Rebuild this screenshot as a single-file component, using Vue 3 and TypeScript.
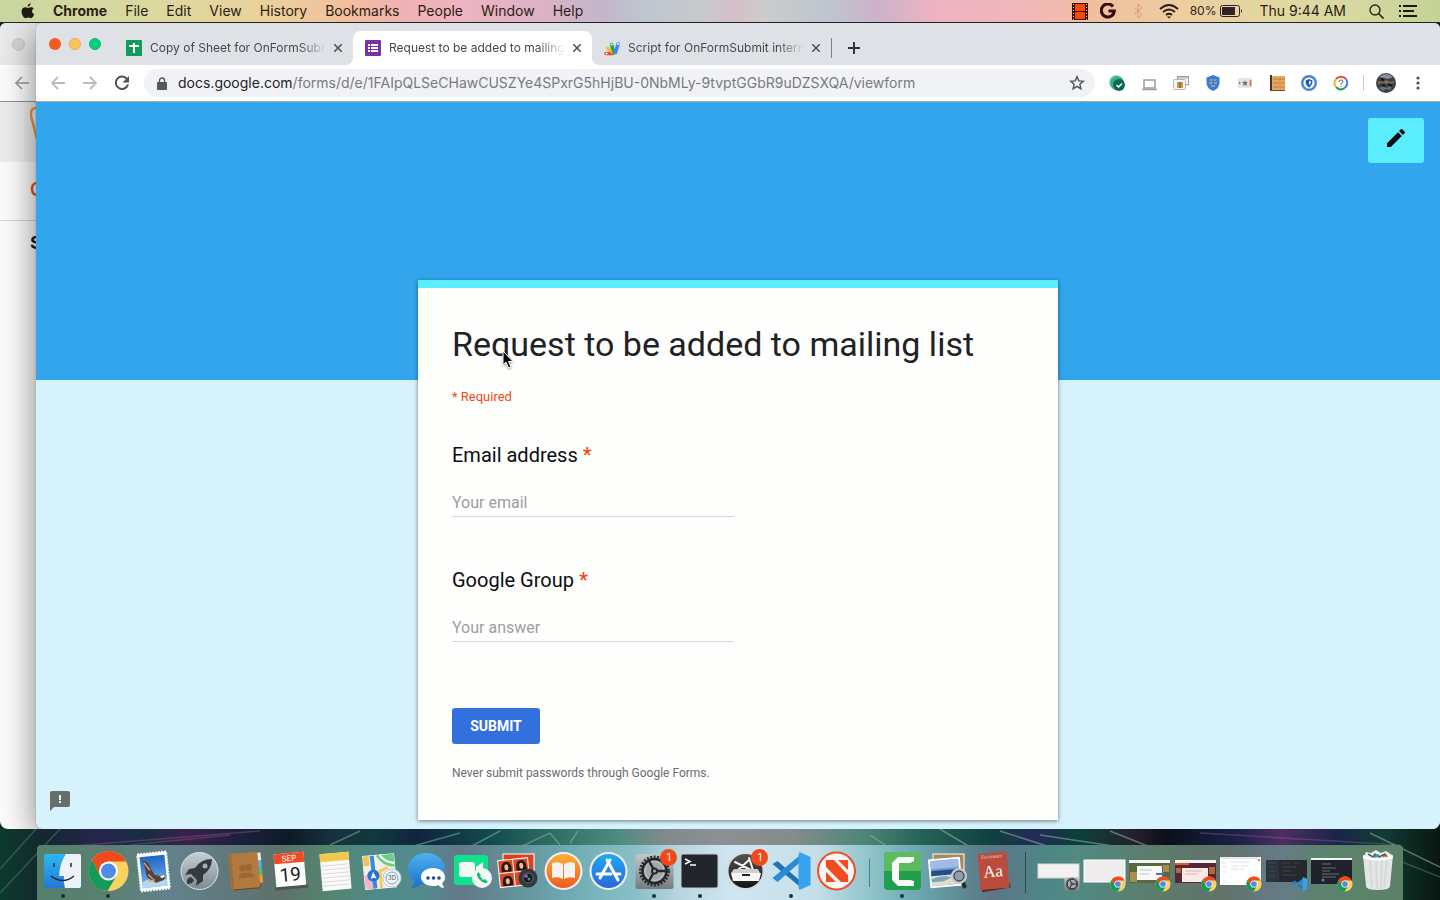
<script setup lang="ts">
import { ref } from 'vue'

interface DockItem {
  name: string
  art: string
  running?: boolean
  badge?: number
}

const email = ref('')
const group = ref('')

const menus: string[] = ['File', 'Edit', 'View', 'History', 'Bookmarks', 'People', 'Window', 'Help']

const chromeBall = (x: number, y: number, s: number): string =>
  `<g transform="translate(${x} ${y}) scale(${s})"><circle r="20" fill="#f9d262"/><path d="M-16.500-11.300A20 20 0 0 1 17.600-9.500H0L-8.200 4.800z" fill="#ee4a1c"/><path d="M-16.500-11.300A20 20 0 0 0-1 20L8.200 4.800H-8.200z" fill="#169a5c"/><circle r="9.500" fill="#fff"/><circle r="7.500" fill="#4f8ce8"/></g>`

const codeMark = (x: number, y: number, s: number): string =>
  `<g transform="translate(${x} ${y}) scale(${s})"><path d="M-19-7l5-3L10 11v6z" fill="#1f72b8"/><path d="M-19 7l5 4L10-10v-7z" fill="#2a8bd8"/><path d="M8-19l11 5v28L8 19l-1-3V-16z" fill="#35a3ee"/></g>`

const gear = (x: number, y: number, s: number): string =>
  `<g transform="translate(${x} ${y}) scale(${s})"><rect x="-19" y="-17" width="38" height="35" rx="2" fill="url(#g-steel)"/><circle r="14" fill="none" stroke="#2b2e30" stroke-width="3" stroke-dasharray="2 1.400"/><circle r="12" fill="#a4a8aa" stroke="#25282a" stroke-width="2.500"/><circle r="9.500" fill="none" stroke="#c6c9ca" stroke-width="1"/><path d="M0 0L11 0M0 0L-5.500-10M0 0L-5.500 10" stroke="#25282a" stroke-width="2.500"/><circle r="2.500" fill="#aaa" stroke="#25282a" stroke-width="2"/></g>`

const apps: DockItem[] = [
  {
    name: 'Finder',
    running: true,
    art: `<rect x="4" y="9" width="37" height="34" rx="2" fill="url(#g-finder)"/><path d="M26 9h13q2 0 2 2v30q0 2-2 2H25q-2-6-1-12h-5q1-14 7-22z" fill="#eef2f8"/><path d="M14 18v4M31 18v4" stroke="#17283c" stroke-width="1.500"/><path d="M11 31q12 9 23 0" fill="none" stroke="#17283c" stroke-width="1.500"/>`,
  },
  { name: 'Google Chrome', running: true, art: chromeBall(22.5, 26, 1) },
  {
    name: 'Mail',
    art: `<g transform="rotate(-6 22 26)"><rect x="8" y="8" width="29" height="37" fill="#fff" stroke="#fff" stroke-width="2" stroke-dasharray="2 1"/><rect x="10" y="11" width="25" height="31" fill="url(#g-sky)"/><path d="M10 36q12-5 25 0v6H10z" fill="#b2d7ef"/><path d="M13 15q6 1 7 8l3 7 6 2 5-1-2 5-8 2-6-4q-4-3-3-8z" fill="#5a4030"/><path d="M14 17l5 8M17 29l4 5" stroke="#c6a680" stroke-width="1.500"/><path d="M29 33l4-1" stroke="#fff" stroke-width="2"/><path d="M16 36l7-1" stroke="#d8a860" stroke-width="1.500"/></g>`,
  },
  {
    name: 'Launchpad',
    art: `<circle cx="22.500" cy="26" r="18.500" fill="url(#g-silver)" stroke="#dfe5e7" stroke-width="1"/><path d="M35 14q-11 0-17 9l-6 1-4 6 6-1 6 6-1 6 7-5v-6q9-6 9-16z" fill="#343a40"/><circle cx="28" cy="21" r="2.500" fill="#a5b0b5"/><path d="M14 32q-5 1-4 7 6 0 7-4z" fill="#343a40"/>`,
  },
  {
    name: 'Contacts',
    art: `<g transform="rotate(-5 22 26)"><path d="M36 9h4v8h-4z" fill="#e8edf2"/><path d="M36 17h4v7h-4z" fill="#4fb6e8"/><path d="M36 24h4v7h-4z" fill="#37c888"/><path d="M36 31h4v8h-4z" fill="#ec9c3b"/><rect x="8" y="8" width="29" height="36" rx="2" fill="#b27a41"/><path d="M8 8h3v36H8z" fill="#a36d38"/><path d="M10 44h26l2-3" fill="none" stroke="#6c4520" stroke-width="1"/><g fill="#9c6735"><circle cx="21" cy="23" r="3.500"/><circle cx="27" cy="23" r="3.500"/><path d="M16 33q1-6 8-5 8-1 8 5z"/></g></g>`,
  },
  {
    name: 'Calendar',
    art: `<g transform="rotate(-5 22 26)"><path d="M8 40h30l1 4H5z" fill="#4d5455"/><rect x="7" y="8" width="30" height="33" fill="#fbfbfb"/><rect x="7" y="8" width="30" height="10" fill="#ee4a25"/><text x="22" y="16" font-family="Inter,sans-serif" font-size="8" text-anchor="middle" fill="#fff">SEP</text><text x="22" y="36" font-family="Roboto,sans-serif" font-size="19" text-anchor="middle" fill="#222">19</text></g>`,
  },
  {
    name: 'Notes',
    art: `<g transform="rotate(-5 22 26)"><rect x="8" y="8" width="29" height="37" fill="#fafafa"/><rect x="8" y="8" width="29" height="8" fill="#f3c84d"/><path d="M8 20h29M8 24h29M8 28h29M8 32h29M8 36h29M8 40h29" stroke="#dcdad6" stroke-width="1"/></g>`,
  },
  {
    name: 'Maps',
    art: `<g transform="rotate(-5 22 26)"><rect x="5" y="10" width="31" height="33" fill="#f1efe6" stroke="#fff"/><path d="M5 10h6v10H5z" fill="#f2c35a"/><path d="M18 10h18v13q-12-1-18-13z" fill="#68cf86"/><path d="M22 10q5 8 14 9" fill="none" stroke="#fff" stroke-width="2"/><path d="M5 29h10v14H5z" fill="#f1b6c3"/><path d="M14 10l1 33" stroke="#3988e4" stroke-width="4"/><path d="M21 43V26l8-3" fill="none" stroke="#f4cd5c" stroke-width="3"/><circle cx="14" cy="30" r="6" fill="#2374dc"/><path d="M14 26l3 7-3-1-3 1z" fill="#fff"/></g><circle cx="33" cy="33" r="9" fill="#f3f6f7" stroke="#c3c9cc" stroke-width="1"/><circle cx="33" cy="33" r="6" fill="none" stroke="#6aa2d0" stroke-width="1"/><text x="33" y="35" font-family="Inter,sans-serif" font-size="6" text-anchor="middle" fill="#555">3D</text>`,
  },
  {
    name: 'Messages',
    art: `<path d="M22 8c-10 0-18 7-18 16 0 5 3 9 6 12 0 3-1 5-3 7 5 0 8-2 10-4 16 3 24-5 24-15 0-9-8-16-19-16z" fill="url(#g-sky2)"/><path d="M29 23c-7 0-12 4-12 9s5 9 12 9c2 0 4 0 5-1 2 2 4 3 6 3l-2-5c2-1 3-3 3-6 0-5-5-9-12-9z" fill="#fff"/><g fill="#244c86"><circle cx="24" cy="33" r="1.800"/><circle cx="29.500" cy="33" r="1.800"/><circle cx="35" cy="33" r="1.800"/></g>`,
  },
  {
    name: 'FaceTime',
    art: `<rect x="4" y="10" width="34" height="30" rx="3" fill="#0ee38c"/><rect x="9" y="17" width="16" height="15" rx="3" fill="#f5f7f7"/><path d="M26 22l7-5v13l-7-4z" fill="#f5f7f7"/><circle cx="32" cy="33" r="10" fill="#f3f6f6"/><path d="M28 27q-3 3 2 8 5 5 8 2l-3-3-2 1-3-4 1-1z" fill="#17bf72"/>`,
  },
  {
    name: 'Photo Booth',
    art: `<rect x="8" y="9" width="31" height="24" fill="#d9431f" stroke="#fff"/><g transform="rotate(-6 20 28)"><rect x="4" y="14" width="30" height="27" fill="#dc4a22" stroke="#fff" stroke-width="1"/><path d="M19 14v27M4 27h30" stroke="#fff" stroke-width="1"/><g fill="#271612"><path d="M7 26V21q1-5 5-5t5 5v5zM22 26V21q1-5 5-5t5 5v5zM7 40v-5q1-5 5-5t5 5v5z"/></g><g fill="#efbd98"><ellipse cx="12" cy="21.500" rx="2" ry="3"/><ellipse cx="27" cy="21.500" rx="2" ry="3"/><ellipse cx="12" cy="35.500" rx="2" ry="3"/></g></g><circle cx="33" cy="33" r="9.500" fill="#35373c"/><circle cx="33" cy="33" r="5" fill="#101722" stroke="#686c76"/><circle cx="31" cy="31" r="2" fill="#8a5a9a"/><circle cx="34" cy="34" r="1.500" fill="#2aa06c"/>`,
  },
  {
    name: 'Books',
    art: `<circle cx="22.500" cy="26" r="19" fill="#f2f2f2"/><circle cx="22.500" cy="26" r="17" fill="url(#g-books)"/><path d="M22 19q-5-3-11-1v15q6-2 11 1zM23 19q5-3 11-1v15q-6-2-11 1z" fill="#f7f4ef"/>`,
  },
  {
    name: 'App Store',
    art: `<circle cx="22.500" cy="26" r="19" fill="#eef2f4"/><circle cx="22.500" cy="26" r="17" fill="url(#g-store)"/><path d="M24 15L14 33M21 15l11 20M11 29h14M29 29h5" stroke="#fff" stroke-width="3" stroke-linecap="round"/>`,
  },
  { name: 'System Preferences', running: true, badge: 1, art: gear(22.5, 26, 1) },
  {
    name: 'Terminal',
    running: true,
    art: `<rect x="4" y="9" width="37" height="34" rx="2" fill="#22252b" stroke="#c6ccd0" stroke-width="1"/><path d="M8 14l5 2.500-5 2.500M13 20h6" stroke="#fff" stroke-width="1.500" fill="none"/>`,
  },
  {
    name: 'Installer',
    badge: 1,
    art: `<circle cx="22.500" cy="26" r="18" fill="url(#g-dark)" stroke="#d8dcde" stroke-width="2"/><path d="M12 17l16 8M26 15l-11 10M26 13l4 12" stroke="#f3f3f3" stroke-width="2" stroke-linecap="round"/><path d="M11 24h24l2 4H8z" fill="#cfcfcf"/><path d="M8 28h30l-2 8H10z" fill="#f6f6f6"/><path d="M19 30h8" stroke="#222" stroke-width="2"/>`,
  },
  { name: 'Visual Studio Code', running: true, art: codeMark(22.5, 26, 1) },
  {
    name: 'News',
    art: `<circle cx="22.500" cy="26" r="19.500" fill="#ef4c22"/><circle cx="22.500" cy="26" r="17.500" fill="#fbf6f4"/><path d="M12 15h8l14 15v7h-7L12 22zM24 15h10v10zM12 27l10 10H12z" fill="#ef4c22"/>`,
  },
]

const recents: DockItem[] = [
  {
    name: 'Camtasia',
    running: true,
    art: `<rect x="4" y="7" width="37" height="38" rx="4" fill="#20a04f"/><path d="M4 11q0-4 4-4h29q4 0 4 4v15H4z" fill="#5cba5f"/><path d="M34 12H18l-6 6v17l6 6h16v-5l-4-1H19V18h11l4-2z" fill="#f8faf8"/>`,
  },
  {
    name: 'Preview',
    art: `<rect x="8" y="9" width="31" height="20" fill="#ad8755" stroke="#fff"/><g transform="rotate(-5 20 26)"><rect x="5" y="14" width="30" height="27" fill="#6e9bd6" stroke="#fff" stroke-width="2"/><path d="M6 15h28v8H6z" fill="#a3bbe4"/><path d="M6 29q14-4 28 1v10H6z" fill="#e4dccb"/><path d="M6 25h28v5H6z" fill="#224d87"/><path d="M6 33q12-4 20 0l-8 3H6z" fill="#7aa5bd"/></g><path d="M37 35l3 8" stroke="#242a2e" stroke-width="4"/><circle cx="34" cy="31" r="7" fill="#8f9eae" stroke="#c9c9c9" stroke-width="2"/><circle cx="34" cy="31" r="5" fill="none" stroke="#333" stroke-width="1"/>`,
  },
  {
    name: 'Dictionary',
    art: `<g transform="rotate(-5 22 26)"><path d="M8 42l28 0 2-3 0 5-28 2z" fill="#5b231c"/><rect x="8" y="8" width="29" height="36" rx="1" fill="#ba4c3d"/><text x="22" y="13" font-family="Liberation Serif,serif" font-size="5" text-anchor="middle" fill="#f3d9d0">Dictionary</text><text x="22" y="32" font-family="Liberation Serif,serif" font-size="17" text-anchor="middle" fill="#fff">Aa</text></g>`,
  },
]

const minimised: DockItem[] = [
  { name: 'Preferences window', art: `<rect x="2" y="19" width="41" height="14" fill="#f3f2f1" stroke="#d5d5d5" stroke-width="1"/>${gear(36, 39, 0.4)}` },
  { name: 'Blank window', art: `<rect x="2" y="15" width="41" height="22" fill="#eeecec" stroke="#fff" stroke-width="1"/>${chromeBall(36, 39, 0.38)}` },
  {
    name: 'Dialog window',
    art: `<rect x="2" y="15" width="41" height="23" fill="#5a683f"/><path d="M2 15h41v3H2z" fill="#f3f3f3"/><path d="M3 27h7v10H3zM36 20h6v7h-6z" fill="#a78d50"/><rect x="10" y="21" width="25" height="14" fill="#f8f8f7"/><path d="M13 25h12M13 29h9" stroke="#a9c7ca"/><path d="M29 29h8" stroke="#3a75e3" stroke-width="2"/>${chromeBall(36, 39, 0.38)}`,
  },
  {
    name: 'Document window',
    art: `<rect x="2" y="15" width="41" height="23" fill="#562638"/><path d="M2 15h41v3H2z" fill="#f3f3f3"/><path d="M2 19h14" stroke="#e35b2a" stroke-width="2"/><path d="M3 23h5v5H3zM36 22h6v7h-6z" fill="#b06a3a"/><rect x="9" y="23" width="26" height="14" fill="#f7e9e5"/><path d="M12 26h17M12 29h13" stroke="#e0b3b0"/>${chromeBall(36, 39, 0.38)}`,
  },
  {
    name: 'List window',
    art: `<rect x="2" y="12" width="41" height="28" fill="#fff"/><path d="M2 13h38" stroke="#c6d5df"/><path d="M12 17h20M13 21h8M23 21h8M13 24h13M4 18h4M4 22h5M4 27h4M5 36h3" stroke="#e6dfe4" stroke-width="1"/><circle cx="41" cy="15" r="1" fill="#e94a30"/>${chromeBall(36, 39, 0.38)}`,
  },
  {
    name: 'Editor window',
    art: `<rect x="2" y="15" width="41" height="22" fill="#25282c"/><path d="M2 15h13v22H2z" fill="#2b3540"/><path d="M5 18h7M17 18h10M30 18h5M5 22h5M18 22h14M5 26h8M18 26h9M18 30h15M5 31h6" stroke="#3e4751" stroke-width="1"/>${codeMark(36, 39, 0.37)}`,
  },
  {
    name: 'Console window',
    art: `<rect x="2" y="13" width="41" height="26" fill="#20242a"/><path d="M2 14h41" stroke="#f4f4f4" stroke-width="2"/><path d="M13 19h9M13 23h14M13 26h8M13 29h17M13 32h14" stroke="#646c74" stroke-width="1"/><circle cx="14" cy="35" r="1.500" fill="#4b83e8"/>${chromeBall(36, 39, 0.38)}`,
  },
  {
    name: 'Trash',
    art: `<path d="M8 10h30l-3 31q0 4-12 4T11 41z" fill="#e3e6e5"/><path d="M15 14l2 28M21 14l1 30M27 14l-1 30M32 14l-3 28" stroke="#d5d9d8" stroke-width="2"/><path d="M9 12l2-5 5 1 5-3 5 3 5-2 6 4v4q-14 3-28-2z" fill="#eee"/><path d="M13 9l5 3 2-3 4 3 6-3 2 3" fill="none" stroke="#5c5c59" stroke-width="1.500"/><path d="M19 12l5-2" stroke="#1aa0b9" stroke-width="2"/><path d="M28 12l3-2" stroke="#d84a2a" stroke-width="1.500"/><path d="M8 12q15 5 30 0" fill="none" stroke="#fff" stroke-width="2"/>`,
  },
]

const dockGroups: DockItem[][] = [apps, recents, minimised]

const sheetsIcon = `<rect width="16" height="16" rx="1" fill="#0f9d58"/><path d="M7 3h2v10H7zM3 5h10v2H3z" fill="#fff"/>`
const formsIcon = `<rect width="16" height="16" rx="1" fill="#7633a8"/><path d="M3 4h2v2H3zM6 4h7v2H6zM3 7h2v2H3zM6 7h7v2H6zM3 10h2v2H3zM6 10h7v2H6z" fill="#fff"/>`
const scriptIcon = `<path d="M2 13.500h7" stroke="#ea4a1c" stroke-width="3.500" stroke-linecap="round"/><path d="M3.500 8l6 5" stroke="#fbbc2c" stroke-width="3" stroke-linecap="round"/><path d="M7.500 4.500l2.500 8" stroke="#28a35c" stroke-width="3.500" stroke-linecap="round"/><path d="M14 4l-2.500 8.500" stroke="#4285f4" stroke-width="3.500" stroke-linecap="round"/><circle cx="2.500" cy="13.500" r="1" fill="#fff"/><circle cx="7.500" cy="4.500" r="1" fill="#fff"/><circle cx="14" cy="4" r="1" fill="#fff"/>`

const tabs = [
  { title: 'Copy of Sheet for OnFormSubmit', icon: sheetsIcon, active: false },
  { title: 'Request to be added to mailing list', icon: formsIcon, active: true },
  { title: 'Script for OnFormSubmit internal', icon: scriptIcon, active: false },
]

const extensions = [
  { name: 'Status checker', art: `<circle cx="7" cy="7" r="7" fill="#9ad9c4"/><circle cx="8" cy="8" r="7" fill="#39b08a"/><circle cx="10" cy="10" r="6" fill="#0a6a56"/><path d="M7.500 10l2 2 3.500-3.500" stroke="#fff" stroke-width="1.500" fill="none"/>` },
  { name: 'Laptop', art: `<rect x="3" y="5" width="11" height="8" fill="#fff" stroke="#9b9ea1" stroke-width="1.500"/><path d="M1 14.500h15" stroke="#9b9ea1" stroke-width="1.500"/>` },
  { name: 'Windows', art: `<rect x="4.500" y="1.500" width="11" height="8" fill="#fff" stroke="#96999e"/><path d="M4 3h12" stroke="#96999e"/><rect x=".5" y="4.500" width="12" height="10" rx="1" fill="#f5f5f5" stroke="#b5b5b5"/><rect x="4" y="7" width="6" height="6" fill="#c79a55"/><path d="M7 7v6" stroke="#644526"/>` },
  { name: 'Shield', art: `<path d="M8 0l6.500 2.500V8q0 5-6.500 8-6.500-3-6.500-8V2.500z" fill="#3a7be0"/><path d="M5 5h2.500M9 5h2.500M4 8h3.500M9 8h3M6 11h4" stroke="#b9ab72" stroke-width="1.500"/>` },
  { name: 'Rating', art: `<rect x="1" y="3" width="14" height="10" rx="1" fill="#e2e5e7"/><path d="M8 5l.8 2H11L9.500 8.500 10 11 8 9.800 6 11l.5-2.500L5 7h2.200zM2 6.500L4 8l-2 1.500z" fill="#6b737a"/><path d="M13.500 5v6" stroke="#ef5a2c" stroke-width="1.500"/>` },
  { name: 'Notebook', art: `<rect x="1" y="1" width="15" height="14" fill="#e3ae5c"/><path d="M1 0h2v16H1z" fill="#4a3528"/><path d="M4 4h12M4 8h12M4 12h12" stroke="#b5793d"/><path d="M4 14l6-10 5 10z" fill="#e58c68" opacity="0.500"/><path d="M1 15.500h15" stroke="#6d4a2e"/>` },
  { name: 'Secure ring', art: `<circle cx="8" cy="8" r="8" fill="#4c84df"/><circle cx="8" cy="8" r="5.500" fill="#fff"/><path d="M8 4l3.500 1.500q0 5-3.500 7-3.500-2-3.500-7z" fill="#2858a4"/><path d="M8 6h2q0 3-2 4z" fill="#fff"/>` },
  { name: 'Help ring', art: `<g fill="none" stroke-width="2"><path d="M3 4A6.500 6.500 0 0 1 13 4" stroke="#ec5023"/><path d="M13 4A6.500 6.500 0 0 1 11 13.500" stroke="#397ee8"/><path d="M11 13.500A6.500 6.500 0 0 1 3 12" stroke="#25a35d"/><path d="M3 12A6.500 6.500 0 0 1 3 4" stroke="#f2b233"/></g><path d="M6 7q0-2 2-2t2 1.500Q10 8 8 8.500V10M8 11v1" fill="none" stroke="#666" stroke-width="1"/>` },
]
</script>

<template>
  <div class="desktop">
    <svg class="defs" width="0" height="0" aria-hidden="true">
      <defs>
        <linearGradient id="g-finder" x2="0" y2="1"><stop stop-color="#2cb8f2" /><stop offset="1" stop-color="#2577d8" /></linearGradient>
        <linearGradient id="g-sky" x2="0" y2="1"><stop stop-color="#1e64c4" /><stop offset="1" stop-color="#79b5ea" /></linearGradient>
        <linearGradient id="g-sky2" x2="0" y2="1"><stop stop-color="#4eb0ef" /><stop offset="1" stop-color="#1873cb" /></linearGradient>
        <linearGradient id="g-silver" x2="0" y2="1"><stop stop-color="#c3d0d3" /><stop offset="1" stop-color="#7c8a90" /></linearGradient>
        <linearGradient id="g-books" x2="0" y2="1"><stop stop-color="#f9b035" /><stop offset="1" stop-color="#f15a22" /></linearGradient>
        <linearGradient id="g-store" x2="0" y2="1"><stop stop-color="#20a9f0" /><stop offset="1" stop-color="#2b66dc" /></linearGradient>
        <linearGradient id="g-steel" x2="0" y2="1"><stop stop-color="#c4c8ca" /><stop offset="1" stop-color="#777b7e" /></linearGradient>
        <linearGradient id="g-dark" x2="0" y2="1"><stop stop-color="#555" /><stop offset="1" stop-color="#111" /></linearGradient>
      </defs>
    </svg>

    <header class="menubar">
      <nav class="menus">
        <button class="apple" aria-label="Apple menu">
          <svg width="14" height="16" viewBox="0 0 14 16"><path d="M9.500 0q.2 2.800-2.800 3.800Q6.500 1.200 9.500 0zM12.800 5.200q-2 1.200-1.800 3.200.2 2 2.200 2.800-1.200 3.600-3.200 4-1.400-.7-2.600-.7T4.600 15.200Q1 14.200.6 8.800.6 4.600 4 4.200q1.600.2 3 .9 1.400-.8 3-.9 1.800.1 2.800 1z" fill="#1d1a12" /></svg>
        </button>
        <button class="app-name">Chrome</button>
        <button v-for="m in menus" :key="m">{{ m }}</button>
      </nav>
      <div class="status">
        <svg width="16" height="17" viewBox="0 0 16 17"><path d="M0 0h16v17H0z" fill="#3a120a" /><path d="M3 1h10v7H3zM3 9h10v7H3z" fill="#f4480f" /><path d="M1.500 1v16M14.500 1v16" stroke="#f7c8a0" stroke-width="1" stroke-dasharray="1 2" /></svg>
        <svg class="s-g" width="16" height="16" viewBox="0 0 16 16"><path d="M13 3.500A6.500 6.500 0 1 0 14.300 8H8.500" fill="none" stroke="#32100f" stroke-width="3" /></svg>
        <svg class="s-bt" width="10" height="16" viewBox="0 0 10 16"><path d="M1 4.500l8 7-4 3.500V1l4 3.500-8 7" fill="none" stroke="#d69a85" stroke-width="1" /></svg>
        <svg class="s-wifi" width="20" height="15" viewBox="0 0 20 15"><path d="M1 5q9-8 18 0M4 8q6-5 12 0M7 11q3-2.500 6 0" fill="none" stroke="#2e1a16" stroke-width="1.800" /><path d="M8 12.500h4l-2 2z" fill="#2e1a16" /></svg>
        <span class="percent">80%</span>
        <svg class="s-bat" width="23" height="12" viewBox="0 0 23 12"><rect x=".5" y=".5" width="19" height="11" rx="2" fill="none" stroke="#2e1f1f" /><path d="M2 2h13v8H2z" fill="#35202d" /><path d="M21 4q2 2 0 4z" fill="#2e1f1f" /></svg>
        <time class="clock">Thu 9:44 AM</time>
        <svg class="s-find" width="15" height="15" viewBox="0 0 15 15"><circle cx="6" cy="6" r="5" fill="none" stroke="#2a2712" stroke-width="1.400" /><path d="M9.500 9.500l5 5" stroke="#2a2712" stroke-width="1.600" /></svg>
        <svg class="s-list" width="18" height="12" viewBox="0 0 18 12"><path d="M0 1h2M0 6h2M0 11h2M4 1h14M4 6h11M4 11h14" stroke="#1c1a0c" stroke-width="2" /></svg>
      </div>
    </header>

    <main class="stage">
      <section class="back-window" aria-hidden="true">
        <div class="back-tabs"><span class="dim-light"></span></div>
        <div class="back-tools">
          <svg width="14" height="14" viewBox="0 0 14 14"><path d="M14 7H1M7 1L1 7l6 6" fill="none" stroke="#999" stroke-width="1.600" /></svg>
        </div>
        <div class="back-banner">
          <svg width="14" height="40" viewBox="0 0 14 40"><path d="M14 1H5Q0 2 1 9l8 31" fill="none" stroke="#e19a4c" stroke-width="2.500" /></svg>
        </div>
        <div class="back-head">C</div>
        <div class="back-body">S</div>
      </section>

      <section class="window">
        <div class="tabstrip">
          <div class="lights">
            <button class="light close" aria-label="Close window"></button>
            <button class="light mini" aria-label="Minimise window"></button>
            <button class="light zoom" aria-label="Zoom window"></button>
          </div>
          <div v-for="t in tabs" :key="t.title" class="tab" :class="{ active: t.active }">
            <svg class="favicon" width="16" height="16" viewBox="0 0 16 16" v-html="t.icon"></svg>
            <span class="tab-title">{{ t.title }}</span>
            <button class="tab-close" aria-label="Close tab">
              <svg width="8" height="8" viewBox="0 0 8 8"><path d="M0 0l8 8M8 0L0 8" stroke="#4a4e53" stroke-width="1.500" /></svg>
            </button>
          </div>
          <span class="tab-rule"></span>
          <button class="new-tab" aria-label="New tab">
            <svg width="12" height="12" viewBox="0 0 12 12"><path d="M6 0v12M0 6h12" stroke="#303338" stroke-width="2" /></svg>
          </button>
        </div>

        <div class="toolbar">
          <button class="tool" aria-label="Back"><svg width="14" height="14" viewBox="0 0 14 14"><path d="M14 7H1M7 1L1 7l6 6" fill="none" stroke="#bcb9c4" stroke-width="1.800" /></svg></button>
          <button class="tool" aria-label="Forward"><svg width="14" height="14" viewBox="0 0 14 14"><path d="M0 7h13M7 1l6 6-6 6" fill="none" stroke="#bcb9c4" stroke-width="1.800" /></svg></button>
          <button class="tool" aria-label="Reload"><svg width="16" height="16" viewBox="0 0 16 16"><path d="M13 4A6.200 6.200 0 1 0 14 9.500" fill="none" stroke="#505357" stroke-width="2" /><path d="M15 1v6.500H8.500z" fill="#505357" /></svg></button>
          <div class="omnibox">
            <svg width="10" height="13" viewBox="0 0 10 13"><path d="M1 5h8q1 0 1 1v6q0 1-1 1H1q-1 0-1-1V6q0-1 1-1z" fill="#55595e" /><path d="M2.500 6V3.500a2.500 2.500 0 0 1 5 0V6" fill="none" stroke="#55595e" stroke-width="1.400" /></svg>
            <span class="url"><b>docs.google.com</b>/forms/d/e/1FAIpQLSeCHawCUSZYe4SPxrG5hHjBU-0NbMLy-9tvptGGbR9uDZSXQA/viewform</span>
            <button class="star" aria-label="Bookmark this page"><svg width="16" height="16" viewBox="0 0 16 16"><path d="M8 1.800l1.800 4.100 4.500.4-3.400 3 1 4.400L8 11.400l-3.900 2.300 1-4.400-3.400-3 4.500-.4z" fill="none" stroke="#505357" stroke-width="1.400" /></svg></button>
          </div>
          <button v-for="e in extensions" :key="e.name" class="tool" :aria-label="e.name">
            <svg width="16" height="16" viewBox="0 0 16 16" v-html="e.art"></svg>
          </button>
          <span class="tool-rule"></span>
          <button class="tool" aria-label="Profile">
            <svg width="20" height="20" viewBox="0 0 20 20"><circle cx="10" cy="10" r="10" fill="#3c4148" /><path d="M3 4q7-6 14 0l-5 2-4-1z" fill="#8b9096" /><path d="M2 8l5 1 3-2 4 2 4-1v2l-6 1-4-1-6 1z" fill="#826f4a" /><path d="M3 15l4-2 3 2 4-2 2 1-2 3-4-1-3 2z" fill="#66737b" /><path d="M5 6l3 1M12 11l4 2M6 12l3 1" stroke="#15181c" stroke-width="2" /></svg>
          </button>
          <button class="tool" aria-label="Chrome menu"><svg width="4" height="14" viewBox="0 0 4 14"><g fill="#4d5156"><circle cx="2" cy="2" r="1.600" /><circle cx="2" cy="7" r="1.600" /><circle cx="2" cy="12" r="1.600" /></g></svg></button>
        </div>

        <div class="page">
          <button class="edit" aria-label="Edit this form">
            <svg width="18" height="18" viewBox="0 0 18 18"><path d="M0 14.200V18h3.800L14.800 7 11 3.200zM17.700 4.100a1 1 0 0 0 0-1.400L15.300.3a1 1 0 0 0-1.400 0L12 2.100 15.900 6z" fill="#0b0d0e" /></svg>
          </button>
          <form class="card" @submit.prevent>
            <h1>Request to be added to mailing list</h1>
            <p class="required">* Required</p>
            <label for="email">Email address <span class="star-mark">*</span></label>
            <input id="email" v-model="email" type="email" placeholder="Your email" />
            <label for="group">Google Group <span class="star-mark">*</span></label>
            <input id="group" v-model="group" type="text" placeholder="Your answer" />
            <button class="submit" type="submit">SUBMIT</button>
            <p class="note">Never submit passwords through Google Forms.</p>
            <svg class="pointer" width="14" height="20" viewBox="0 0 14 20"><path d="M1 1v14l3-3 2.500 6 2.500-1-2.500-5.500H11z" fill="#050505" stroke="#fff" stroke-width="1" /></svg>
          </form>
          <button class="feedback" aria-label="Report a problem">
            <svg width="20" height="20" viewBox="0 0 20 20"><path d="M2 0h16q2 0 2 2v12q0 2-2 2H4l-4 4V2q0-2 2-2z" fill="#667069" /><path d="M9 4h2v5H9zM9 10h2v2H9z" fill="#e4f5fa" /></svg>
          </button>
        </div>
      </section>
    </main>

    <footer class="shelf">
      <svg class="streaks" viewBox="0 0 1440 71" preserveAspectRatio="none" aria-hidden="true">
        <g fill="none" stroke-width="1.500">
          <path d="M0 40L36 0M0 64L60 0M1440 48L1370 20" stroke="#5f9a86" opacity="0.400" />
          <path d="M60 18L260 2M130 16L230 6M1200 4L1400 16" stroke="#9a6a96" opacity="0.350" />
          <path d="M330 16l30-14M410 18L460 4M470 18L500 2M520 18l30-14" stroke="#8fb5a8" opacity="0.500" />
          <path d="M940 0l30 18M1000 2l50 16M1110 2l40 16M1040 6L1120 18M1370 4l70 34" stroke="#9fc0b2" opacity="0.500" />
          <path d="M550 4l10 12M570 14l8-12M870 6l18 12" stroke="#a5cfc0" opacity="0.400" />
        </g>
      </svg>
      <nav class="dock" aria-label="Dock">
        <template v-for="(g, gi) in dockGroups" :key="gi">
          <span v-if="gi > 0" class="dock-rule" :class="{ tall: gi === 2 }"></span>
          <button v-for="d in g" :key="d.name" class="dock-item" :aria-label="d.name">
            <svg width="45" height="55" viewBox="0 0 45 55" v-html="d.art"></svg>
            <span v-if="d.badge" class="badge">{{ d.badge }}</span>
            <span v-if="d.running" class="dot"></span>
          </button>
        </template>
      </nav>
    </footer>
  </div>
</template>

<style>
html,
body {
  margin: 0;
}
</style>

<style scoped>
.desktop,
.desktop * {
  box-sizing: border-box;
}
.desktop {
  min-height: 100vh;
  display: flex;
  flex-direction: column;
  overflow: hidden;
  background: #0d2a2c;
  font-family: Inter, Roboto, sans-serif;
}
.defs {
  position: absolute;
}
button {
  margin: 0;
  padding: 0;
  border: 0;
  background: none;
  font: inherit;
  color: inherit;
}
svg {
  display: block;
  flex: none;
}

.menubar {
  height: 22px;
  margin-bottom: 1px;
  position: relative;
  z-index: 2;
  display: flex;
  justify-content: space-between;
  align-items: center;
  padding: 0 23px 0 21px;
  color: #2c1d14;
  font-size: 14px;
  line-height: 22px;
  background: linear-gradient(90deg, #c8d69f 0%, #dad9a0 10%, #ecd09c 19%, #f1bf9d 24%, #efb2b4 28%, #eeb5c1 32%, #dab2c6 38%, #c3b6ca 42%, #bec8d0 45%, #c9c9cb 49%, #d5bfc9 51%, #cccccb 53%, #bec7d0 57%, #ccb2c9 61%, #eeb4c2 65%, #f0b7bc 71%, #f0bfa0 76%, #eecda0 82%, #dfd8a1 89%, #d6d89f 94%, #c3d398 100%);
  box-shadow: 0 1px 0 #24241f;
}
.menus {
  display: flex;
  gap: 18px;
}
.apple {
  display: flex;
  align-items: center;
}
.app-name {
  font-weight: 700;
}
.status {
  display: flex;
  align-items: center;
}
.s-g { margin-left: 12px; }
.s-bt { margin-left: 17px; }
.s-wifi { margin-left: 16px; }
.percent { margin-left: 11px; font-size: 12px; }
.s-bat { margin-left: 4px; }
.clock { margin-left: 16px; }
.s-find { margin-left: 23px; }
.s-list { margin-left: 15px; }

.stage {
  flex: 1;
  display: grid;
}
.back-window,
.window {
  grid-area: 1 / 1;
  border-radius: 6px 6px 8px 8px;
  overflow: hidden;
}
.back-window {
  background: #fdfdfd;
  margin-right: 36px;
}
.back-tabs {
  height: 42px;
  padding: 15px 12px;
  background: #e9eaec;
}
.dim-light {
  display: block;
  width: 13px;
  height: 13px;
  border-radius: 50%;
  background: #d5d5d6;
  border: 1px solid #c6c6c7;
}
.back-tools {
  height: 37px;
  padding: 11px 15px;
  border-bottom: 1px solid #8e9292;
  background: #fdfdfd;
}
.back-banner {
  height: 60px;
  padding: 5px 30px;
  background: #eeeeee;
}
.back-head {
  height: 59px;
  padding-left: 30px;
  border-bottom: 1px solid #d5d5d5;
  color: #d9531e;
  font-size: 18px;
  font-weight: 600;
  line-height: 56px;
}
.back-body {
  padding-left: 30px;
  color: #1c1c1c;
  font-weight: 700;
  font-size: 18px;
  line-height: 44px;
}

.window {
  margin-left: 36px;
  display: flex;
  flex-direction: column;
  background: #fff;
  box-shadow: 0 0 1px #555, 0 8px 36px rgba(0, 0, 0, 0.5);
}
.tabstrip {
  height: 42px;
  display: flex;
  align-items: flex-end;
  background: #dee1e5;
}
.lights {
  width: 78px;
  height: 42px;
  padding-left: 13px;
  display: flex;
  align-items: center;
  gap: 8px;
}
.light {
  width: 12px;
  height: 12px;
  border-radius: 50%;
}
.close { background: #f45c20; }
.mini { background: #f8c75a; border: 1px solid #eda94a; }
.zoom { background: #0bce7c; border: 1px solid #13b56d; }
.tab {
  flex: 0 1 239px;
  min-width: 0;
  height: 34px;
  display: flex;
  align-items: center;
  padding: 0 7px 0 12px;
  border-radius: 8px 8px 0 0;
  color: #45484d;
  font-size: 12px;
}
.tab.active {
  background: #fff;
  position: relative;
}
.tab.active::before,
.tab.active::after {
  content: '';
  position: absolute;
  bottom: 0;
  width: 8px;
  height: 8px;
}
.tab.active::before {
  left: -8px;
  background: radial-gradient(circle at 0 0, transparent 8px, #fff 8px);
}
.tab.active::after {
  right: -8px;
  background: radial-gradient(circle at 100% 0, transparent 8px, #fff 8px);
}
.tab-title {
  flex: 1;
  min-width: 0;
  margin-left: 8px;
  overflow: hidden;
  white-space: nowrap;
  line-height: 20px;
  mask-image: linear-gradient(90deg, #000 85%, transparent 100%);
}
.tab-close {
  width: 16px;
  height: 16px;
  margin-left: 4px;
  display: grid;
  place-items: center;
}
.tab-rule {
  width: 1px;
  height: 20px;
  margin-bottom: 7px;
  background: #7e8287;
}
.new-tab {
  width: 28px;
  height: 28px;
  margin: 0 0 3px 8px;
  display: grid;
  place-items: center;
}
.toolbar {
  height: 37px;
  display: flex;
  align-items: center;
  padding: 0 6px;
  border-bottom: 1px solid #a9abab;
  background: #fff;
}
.tool {
  flex: none;
  width: 32px;
  height: 32px;
  display: grid;
  place-items: center;
}
.omnibox {
  flex: 1;
  min-width: 0;
  height: 28px;
  margin: 0 6px;
  padding: 0 10px 0 13px;
  display: flex;
  align-items: center;
  border-radius: 14px;
  background: #f1f2f5;
}
.url {
  flex: 1;
  min-width: 0;
  margin-left: 11px;
  overflow: hidden;
  white-space: nowrap;
  color: #767b80;
  font-size: 14px;
  line-height: 20px;
}
.url b {
  color: #202328;
  font-weight: 400;
}
.tool-rule {
  width: 1px;
  height: 16px;
  margin: 0 6px;
  background: #c9ccd0;
}

.page {
  flex: 1;
  position: relative;
  padding: 178px 20px 9px;
  background: linear-gradient(#32a5ed 278px, #d6f2fd 278px);
  font-family: Roboto, sans-serif;
}
.edit {
  position: absolute;
  top: 16px;
  right: 16px;
  width: 56px;
  height: 45px;
  padding-bottom: 5px;
  display: grid;
  place-items: center;
  border-radius: 3px;
  background: #59edfd;
}
.card {
  position: relative;
  max-width: 640px;
  margin: 0 auto;
  padding: 33px 34px 38px;
  display: flex;
  flex-direction: column;
  align-items: flex-start;
  border-top: 8px solid #5aeffe;
  background: #fefefd;
  box-shadow: 0 1px 4px rgba(0, 0, 0, 0.5);
}
h1 {
  margin: 0;
  color: #212224;
  font-size: 34px;
  font-weight: 400;
  line-height: 46px;
}
.required {
  margin: 21px 0 37px;
  color: #ee4b14;
  font-size: 13px;
  line-height: 18px;
}
label {
  color: #0c0d10;
  font-size: 20px;
  line-height: 24px;
}
.star-mark {
  color: #ee4b14;
  font-weight: 500;
}
input {
  width: 282px;
  max-width: 100%;
  height: 27px;
  margin: 23px 0 51px;
  padding: 0 0 2px;
  border: 0;
  border-bottom: 1px solid #d5d6d6;
  border-radius: 0;
  outline: 0;
  background: transparent;
  font-family: inherit;
  font-size: 16px;
}
input::placeholder {
  color: #9c9ea2;
  opacity: 1;
}
.submit {
  width: 88px;
  height: 36px;
  margin-top: 15px;
  border-radius: 3px;
  background: #3470dc;
  color: #fff;
  font-size: 14px;
  font-weight: 700;
}
.note {
  margin: 20px 0 0;
  color: #6b6d70;
  font-size: 12px;
  line-height: 18px;
}
.pointer {
  position: absolute;
  left: 84px;
  top: 62px;
  filter: drop-shadow(0 1px 1px rgba(0, 0, 0, 0.4));
}
.feedback {
  position: absolute;
  left: 14px;
  bottom: 18px;
}

.shelf {
  position: relative;
  padding: 16px 37px 0;
  background: linear-gradient(90deg, #0d3a2c 0%, #14282f 3%, #28244e 7%, #182d42 10%, #3a2248 13%, #1b1f3c 17%, #0e1a26 20%, #16313f 23%, #0f3a3c 26%, #11243f 29%, #124a4d 34%, #2c6b60 38%, #4e8c80 43%, #7f8b8a 46%, #8c9092 50%, #858c8c 55%, #4e8677 60%, #276257 64%, #0f3f40 69%, #232b58 72%, #0d4038 75%, #261d2b 79%, #0a1018 81%, #1b2149 86%, #4d2d62 89%, #1a2549 93%, #123c34 96%, #07160f 100%);
}
.streaks {
  position: absolute;
  inset: 0;
  width: 100%;
  height: 100%;
}
.dock {
  position: relative;
  display: flex;
  padding: 0 3px;
  border-radius: 4px 4px 0 0;
  background: linear-gradient(90deg, #54806c 0%, #5a7f70 5%, #63818c 10%, #617a80 13%, #5d716a 18%, #55846e 21%, #4f8a8a 25%, #528c8c 28%, #63788a 31%, #62929a 35%, #74b0b8 40%, #8bc0c8 44%, #b9d5dd 47%, #cfe6f0 51%, #c5dfe8 57%, #8fc3cb 61%, #6eacb3 64%, #5d8790 68%, #5d7687 70%, #4d8786 74%, #508a82 76%, #5c7c6b 82%, #61736a 87%, #657b88 91%, #5d836e 94%, #5b8168 100%);
}
.dock-item {
  flex: 1;
  min-width: 0;
  height: 55px;
  position: relative;
  display: flex;
  justify-content: center;
}
.dock-rule {
  width: 20px;
  height: 28px;
  margin-top: 14px;
  background: linear-gradient(#4b7f88, #4b7f88) center / 1px 100% no-repeat;
}
.dock-rule.tall {
  height: 41px;
  margin-top: 7px;
  background-image: linear-gradient(#2b4c52, #2b4c52);
}
.badge {
  position: absolute;
  right: 0;
  top: 4px;
  width: 17px;
  height: 17px;
  border-radius: 50%;
  background: #f04a1a;
  color: #fff;
  font-size: 10px;
  line-height: 17px;
  text-align: center;
}
.dot {
  position: absolute;
  left: 50%;
  bottom: 2px;
  width: 4px;
  height: 4px;
  margin-left: -2px;
  border-radius: 50%;
  background: #16303a;
}
</style>
